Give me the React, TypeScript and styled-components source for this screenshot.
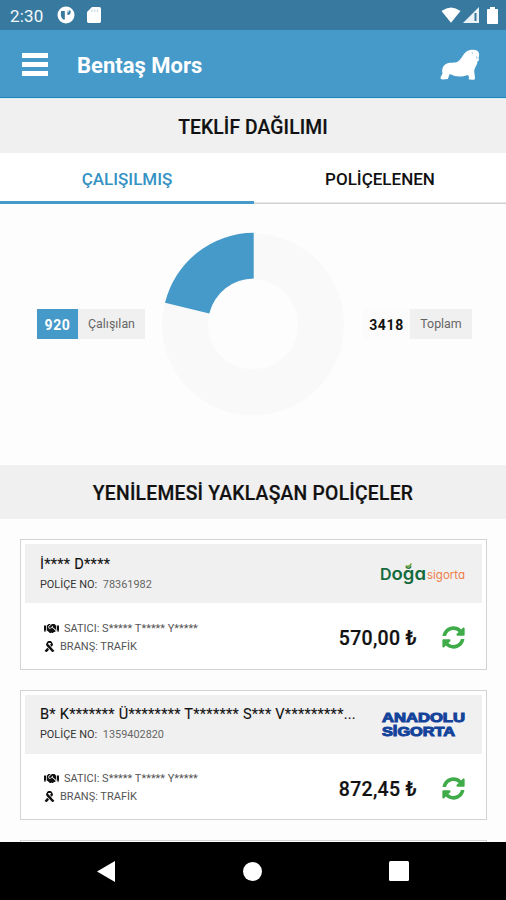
import React from "react";
import styled, { createGlobalStyle } from "styled-components";
import { FaHandshake, FaRibbon, FaSyncAlt } from "react-icons/fa";

const GlobalStyle = createGlobalStyle`
  * { box-sizing: border-box; }
  body { margin: 0; background: #fdfdfd; font-family: Roboto, "Noto Sans", sans-serif; color: #111; }
`;

const Screen = styled.div`
  width: 506px;
  height: 900px;
  display: flex;
  flex-direction: column;
  overflow: hidden;
`;

const StatusBar = styled.div`
  height: 30px;
  flex: none;
  display: flex;
  align-items: center;
  justify-content: space-between;
  padding: 0 7px 0 10px;
  background: #387a9f;
  color: #f3f8fb;
`;

const StatusGroup = styled.div<{ $gap: number }>`
  display: flex;
  align-items: center;
  gap: ${(p) => p.$gap}px;
  height: 30px;
`;

const Clock = styled.span`
  font-size: 17px;
  line-height: 30px;
  width: 34px;
  margin-right: 1px;
  padding-top: 1px;
  letter-spacing: 0.15px;
`;

const Header = styled.header`
  height: 69px;
  flex: none;
  display: flex;
  align-items: center;
  padding: 0 25px 0 22px;
  background: #469aca;
  border-bottom: 1px solid #d4edf6;
  box-shadow: inset 0 -1px 0 #2085b8;
  color: #fff;
`;

const MenuButton = styled.button`
  display: flex;
  flex-direction: column;
  gap: 4px;
  width: 26px;
  padding: 1px 0 0;
  border: 0;
  background: none;
`;

const MenuBar = styled.span`
  height: 5px;
  background: #fff;
`;

const AppTitle = styled.h1`
  flex: 1;
  margin: 0 0 0 29px;
  padding-top: 3px;
  font-size: 22px;
  font-weight: 700;
  line-height: 30px;
`;

const SectionTitle = styled.h2<{ $spacing: number }>`
  height: 54px;
  flex: none;
  margin: 0;
  padding-top: 2px;
  background: #f0f0f0;
  font-size: 19.3px;
  font-weight: 500;
  line-height: 54px;
  text-align: center;
  letter-spacing: ${(p) => p.$spacing}px;
  -webkit-text-stroke: 0.2px #111;
`;

const Tabs = styled.div`
  display: flex;
  height: 51px;
  flex: none;
  background: #fff;
`;

const Tab = styled.div<{ $active?: boolean }>`
  flex: ${(p) => (p.$active ? "0 0 254px" : "1")};
  padding-top: 1px;
  font-size: 17px;
  font-weight: 500;
  line-height: 50px;
  text-align: center;
  color: ${(p) => (p.$active ? "#3592c4" : "#111")};
  box-shadow: inset 0 ${(p) => (p.$active ? "-3px 0 #469aca" : "-1.5px 0 #d2d2d2")};
`;

const ChartRow = styled.div`
  display: flex;
  flex: none;
  height: 261px;
  padding: 0 34px 0 37px;
  justify-content: space-between;
`;

const Stat = styled.div`
  display: flex;
  height: 30px;
  margin-top: 105px;
  line-height: 30px;
`;

const StatValue = styled.span<{ $filled?: boolean }>`
  width: ${(p) => (p.$filled ? 41 : 47)}px;
  padding-top: 1px;
  background: ${(p) => (p.$filled ? "#469aca" : "#fbfbfb")};
  color: ${(p) => (p.$filled ? "#fff" : "#111")};
  font-size: 14px;
  font-weight: 700;
  text-align: center;
  letter-spacing: 0.6px;
`;

const StatLabel = styled.span<{ $width: number }>`
  width: ${(p) => p.$width}px;
  background: #f0f0f0;
  color: #666;
  font-size: 12.4px;
  text-align: center;
`;

const Donut = styled.svg`
  width: 184px;
  height: 184px;
  margin-top: 28px;
`;

const PolicyList = styled.main`
  flex: 1;
  min-height: 0;
  overflow: hidden;
  display: flex;
  flex-direction: column;
  gap: 20px;
  padding: 20px 19px 0 20px;
`;

const Card = styled.article`
  height: 130.5px;
  flex: none;
  padding: 4px;
  border: 1.5px solid #d3d3d3;
  background: #fff;
`;

const CardHead = styled.div`
  height: 59px;
  display: flex;
  justify-content: space-between;
  align-items: center;
  padding: 0 16px 0 15px;
  background: #f0f0f0;
`;

const Insured = styled.div`
  width: 317px;
  font-size: 14.6px;
  line-height: 20px;
  letter-spacing: 0.25px;
  white-space: nowrap;
  -webkit-text-stroke: 0.1px #111;
`;

const PolicyNo = styled.div`
  font-size: 10.9px;
  line-height: 18px;
  margin-top: 2px;
  color: #333;
`;

const Muted = styled.span`
  margin-left: 3px;
  color: #666;
`;

const CardBody = styled.div`
  height: 62px;
  display: flex;
  align-items: center;
  padding: 7px 17px 0 19px;
`;

const Details = styled.div`
  flex: 1;
  margin-top: -1px;
`;

const Detail = styled.div`
  display: flex;
  align-items: center;
  gap: 5px;
  height: 18px;
  font-size: 11px;
  color: #555;
  svg { color: #111; flex: none; }
`;

const Price = styled.div`
  margin-right: 25px;
  padding-top: 2px;
  font-size: 19.5px;
  font-weight: 500;
  letter-spacing: 0.3px;
  -webkit-text-stroke: 0.2px #111;
`;

const NavBar = styled.nav`
  height: 58px;
  flex: none;
  display: flex;
  justify-content: space-between;
  align-items: center;
  padding: 0 97px;
  background: #000;
`;

const WalrusLogo = () => (
  <svg width="41" height="31" viewBox="0 0 41 31">
    <path
      fill="#fff"
      d="M3 30.5C1 30.5 0 29.5.7 28L2.5 24.5C1.5 20 3 16 7 14.5C11 13 15 14.5 18 12.5C22 9.5 23 5 26.5 2.5C29 .5 34 0 37 1.5C39.5 3 39.5 6 38.7 8.5L39 12L37.8 11.5L37 15C35.8 18 34 20 34.2 22.5L35 28.5C35 30.8 33.8 31 31.5 30.8L28.7 30.3L29 27.5L27.6 26C21 28.3 16 28 9.7 25L7.8 30Z"
    />
    <path d="M32.5 3.5v1M36.7 7.5l.2 2" stroke="#71b1d5" strokeWidth=".9" />
  </svg>
);

const LogoSvg = styled.svg`
  flex: none;
  font-feature-settings: "cv11";
`;

const DogaLogo = () => (
  <LogoSvg width="87" height="24" viewBox="0 0 87 24">
    <text x="1" y="17.5" fill="#146a3c" fontFamily="Inter" fontWeight="600" textLength="46" lengthAdjust="spacingAndGlyphs">
      <tspan fontSize="15.5">D</tspan>
      <tspan fontSize="18">oğa</tspan>
    </text>
    <path d="M27 3.6c2 1.6 4.4.6 5.2-2.2" fill="none" stroke="#71a83b" strokeWidth="1.7" />
    <text x="48" y="17" fill="#ee7d4b" fontFamily="Inter" fontSize="11.5" textLength="38" lengthAdjust="spacingAndGlyphs">sigorta</text>
  </LogoSvg>
);

const AnadoluLogo = () => (
  <LogoSvg width="86" height="28" viewBox="0 0 86 28">
    <g fill="#14439a" stroke="#14439a" strokeWidth="1" fontFamily="Liberation Sans" fontSize="12.5" fontWeight="700">
      <text x="2" y="12" textLength="83" lengthAdjust="spacingAndGlyphs">ANADOLU</text>
      <text x="2" y="25.5" textLength="73" lengthAdjust="spacingAndGlyphs">SİGORTA</text>
    </g>
  </LogoSvg>
);

type Policy = {
  name: string;
  number: string;
  price: string;
  logo: React.ReactNode;
};

const policies: Policy[] = [
  { name: "İ**** D****", number: "78361982", price: "570,00 ₺", logo: <DogaLogo /> },
  {
    name: "B* K******* Ü******** T******* S*** V*********...",
    number: "1359402820",
    price: "872,45 ₺",
    logo: <AnadoluLogo />,
  },
];

const PolicyCard = ({ name, number, price, logo }: Policy) => (
  <Card>
    <CardHead>
      <div>
        <Insured>{name}</Insured>
        <PolicyNo>
          POLİÇE NO: <Muted>{number}</Muted>
        </PolicyNo>
      </div>
      {logo}
    </CardHead>
    <CardBody>
      <Details>
        <Detail>
          <FaHandshake size={15} />
          <span>SATICI: S***** T***** Y*****</span>
        </Detail>
        <Detail>
          <FaRibbon size={11} />
          <span>BRANŞ: TRAFİK</span>
        </Detail>
      </Details>
      <Price>{price}</Price>
      <FaSyncAlt size={23} color="#3fab49" />
    </CardBody>
  </Card>
);

export default function App() {
  return (
    <Screen>
      <GlobalStyle />
      <StatusBar>
        <StatusGroup $gap={12}>
          <Clock>2:30</Clock>
          <svg width="18" height="18" viewBox="0 0 18 18">
            <circle cx="9" cy="9" r="8.5" fill="#fff" />
            <path d="M4.2 5h3.6v8.5H6Q2.8 10 4.2 5Z" fill="#387a9f" />
            <path d="M10.4 4.6h3.2v1.9q0 2.4-3.2 2.4Z" fill="#387a9f" />
            <path d="M10.4 4.6h1.3v1.6h-1.3z" fill="#fff" />
          </svg>
          <svg width="14" height="16" viewBox="0 0 14 16">
            <path d="M5 0h7.3Q14 0 14 1.7v12.6q0 1.7-1.7 1.7H1.7Q0 16 0 14.3V5Z" fill="#fff" />
            <path d="M5 2.5v2.5M7.7 2.5v2.5M10.4 2.5v2.5" stroke="#c3d7e2" strokeWidth="1.1" />
          </svg>
        </StatusGroup>
        <StatusGroup $gap={2}>
          <svg width="20" height="16" viewBox="0 0 20 16">
            <path d="M.5 4Q10-3 19.5 4L10 15.8Z" fill="#fff" />
          </svg>
          <svg width="16" height="16" viewBox="0 0 16 16">
            <path d="M0 16 16 0v16Z" fill="#e9f2f6" />
            <path d="M12.5 6v8" stroke="#387a9f" strokeWidth="2" />
          </svg>
          <svg width="18" height="17" viewBox="0 0 18 17">
            <path d="M7 2h2V0h5v2h2.3q.7 0 .7.7v13.5q0 .8-.8.8H6.8q-.8 0-.8-.8V2.7Q6 2 7 2Z" fill="#fff" />
          </svg>
        </StatusGroup>
      </StatusBar>
      <Header>
        <MenuButton aria-label="Menü">
          <MenuBar />
          <MenuBar />
          <MenuBar />
        </MenuButton>
        <AppTitle>Bentaş Mors</AppTitle>
        <WalrusLogo />
      </Header>
      <SectionTitle $spacing={0.12}>TEKLİF DAĞILIMI</SectionTitle>
      <Tabs>
        <Tab $active>ÇALIŞILMIŞ</Tab>
        <Tab>POLİÇELENEN</Tab>
      </Tabs>
      <ChartRow>
        <Stat>
          <StatValue $filled>920</StatValue>
          <StatLabel $width={67}>Çalışılan</StatLabel>
        </Stat>
        <Donut viewBox="0 0 184 184">
          <circle cx="91" cy="92.5" r="68" fill="none" stroke="#f9f9f9" strokeWidth="46" />
          <path d="M91.7 .8V46.5A46 46 0 0 0 47.3 81.5L3 70.8A92 92 0 0 1 91.7 .8Z" fill="#469aca" />
        </Donut>
        <Stat>
          <StatValue>3418</StatValue>
          <StatLabel $width={62}>Toplam</StatLabel>
        </Stat>
      </ChartRow>
      <SectionTitle $spacing={0.25}>YENİLEMESİ YAKLAŞAN POLİÇELER</SectionTitle>
      <PolicyList>
        {policies.map((p) => (
          <PolicyCard key={p.number} {...p} />
        ))}
        <Card />
      </PolicyList>
      <NavBar>
        <svg width="18" height="21" viewBox="0 0 18 21">
          <path d="M18 0v21L0 10.5Z" fill="#fff" />
        </svg>
        <svg width="19" height="19" viewBox="0 0 19 19">
          <circle cx="9.5" cy="9.5" r="9.5" fill="#fff" />
        </svg>
        <svg width="20" height="20" viewBox="0 0 20 20">
          <rect width="20" height="20" rx="1.5" fill="#fff" />
        </svg>
      </NavBar>
    </Screen>
  );
}
